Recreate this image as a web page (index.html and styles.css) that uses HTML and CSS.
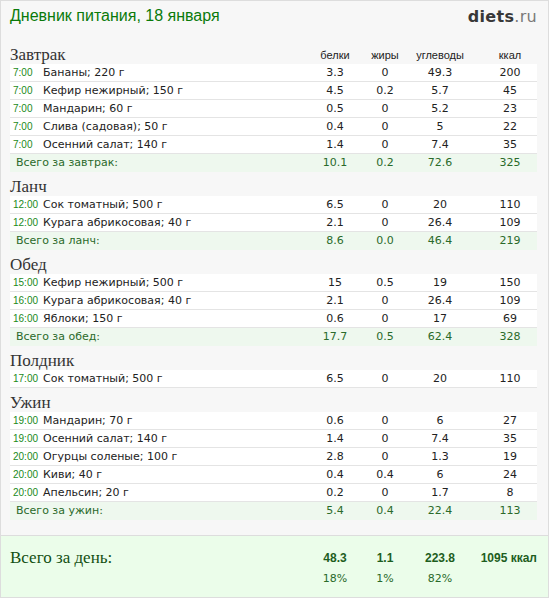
FILE: index.html
```html
<!DOCTYPE html>
<html lang="ru">
<head>
<meta charset="utf-8">
<title>Дневник питания</title>
<link rel="stylesheet" href="styles.css">
</head>
<body>
<div class="page">
  <div class="main">
    <header class="top">
      <h1 class="title">Дневник питания, 18 января</h1>
      <div class="logo"><b>diets</b><span>.ru</span></div>
    </header>

    <section class="meal">
      <div class="meal-head"><h2>Завтрак</h2><span class="lbl">белки</span><span class="lbl">жиры</span><span class="lbl">углеводы</span><span class="lbl kc">ккал</span></div>
      <div class="row"><span class="time">7:00</span><span class="name">Бананы; 220 г</span><span class="num">3.3</span><span class="num">0</span><span class="num">49.3</span><span class="num kc">200</span></div>
      <div class="row"><span class="time">7:00</span><span class="name">Кефир нежирный; 150 г</span><span class="num">4.5</span><span class="num">0.2</span><span class="num">5.7</span><span class="num kc">45</span></div>
      <div class="row"><span class="time">7:00</span><span class="name">Мандарин; 60 г</span><span class="num">0.5</span><span class="num">0</span><span class="num">5.2</span><span class="num kc">23</span></div>
      <div class="row"><span class="time">7:00</span><span class="name">Слива (садовая); 50 г</span><span class="num">0.4</span><span class="num">0</span><span class="num">5</span><span class="num kc">22</span></div>
      <div class="row"><span class="time">7:00</span><span class="name">Осенний салат; 140 г</span><span class="num">1.4</span><span class="num">0</span><span class="num">7.4</span><span class="num kc">35</span></div>
      <div class="row total"><span class="sum">Всего за завтрак:</span><span class="num">10.1</span><span class="num">0.2</span><span class="num">72.6</span><span class="num kc">325</span></div>
    </section>

    <section class="meal">
      <div class="meal-head"><h2>Ланч</h2></div>
      <div class="row"><span class="time">12:00</span><span class="name">Сок томатный; 500 г</span><span class="num">6.5</span><span class="num">0</span><span class="num">20</span><span class="num kc">110</span></div>
      <div class="row"><span class="time">12:00</span><span class="name">Курага абрикосовая; 40 г</span><span class="num">2.1</span><span class="num">0</span><span class="num">26.4</span><span class="num kc">109</span></div>
      <div class="row total"><span class="sum">Всего за ланч:</span><span class="num">8.6</span><span class="num">0.0</span><span class="num">46.4</span><span class="num kc">219</span></div>
    </section>

    <section class="meal">
      <div class="meal-head"><h2>Обед</h2></div>
      <div class="row"><span class="time">15:00</span><span class="name">Кефир нежирный; 500 г</span><span class="num">15</span><span class="num">0.5</span><span class="num">19</span><span class="num kc">150</span></div>
      <div class="row"><span class="time">16:00</span><span class="name">Курага абрикосовая; 40 г</span><span class="num">2.1</span><span class="num">0</span><span class="num">26.4</span><span class="num kc">109</span></div>
      <div class="row"><span class="time">16:00</span><span class="name">Яблоки; 150 г</span><span class="num">0.6</span><span class="num">0</span><span class="num">17</span><span class="num kc">69</span></div>
      <div class="row total"><span class="sum">Всего за обед:</span><span class="num">17.7</span><span class="num">0.5</span><span class="num">62.4</span><span class="num kc">328</span></div>
    </section>

    <section class="meal">
      <div class="meal-head"><h2>Полдник</h2></div>
      <div class="row"><span class="time">17:00</span><span class="name">Сок томатный; 500 г</span><span class="num">6.5</span><span class="num">0</span><span class="num">20</span><span class="num kc">110</span></div>
    </section>

    <section class="meal">
      <div class="meal-head"><h2>Ужин</h2></div>
      <div class="row"><span class="time">19:00</span><span class="name">Мандарин; 70 г</span><span class="num">0.6</span><span class="num">0</span><span class="num">6</span><span class="num kc">27</span></div>
      <div class="row"><span class="time">19:00</span><span class="name">Осенний салат; 140 г</span><span class="num">1.4</span><span class="num">0</span><span class="num">7.4</span><span class="num kc">35</span></div>
      <div class="row"><span class="time">20:00</span><span class="name">Огурцы соленые; 100 г</span><span class="num">2.8</span><span class="num">0</span><span class="num">1.3</span><span class="num kc">19</span></div>
      <div class="row"><span class="time">20:00</span><span class="name">Киви; 40 г</span><span class="num">0.4</span><span class="num">0.4</span><span class="num">6</span><span class="num kc">24</span></div>
      <div class="row"><span class="time">20:00</span><span class="name">Апельсин; 20 г</span><span class="num">0.2</span><span class="num">0</span><span class="num">1.7</span><span class="num kc">8</span></div>
      <div class="row total"><span class="sum">Всего за ужин:</span><span class="num">5.4</span><span class="num">0.4</span><span class="num">22.4</span><span class="num kc">113</span></div>
    </section>
  </div>

  <footer class="day">
    <div class="day-label">Всего за день:</div>
    <span class="big">48.3</span><span class="big">1.1</span><span class="big">223.8</span><span class="big kcal">1095 ккал</span>
    <span class="pct first">18%</span><span class="pct">1%</span><span class="pct">82%</span>
  </footer>
</div>
</body>
</html>
```

FILE: styles.css
```css
html, body {
  margin: 0;
  padding: 0;
  background: #ffffff;
}

.page {
  width: 549px;
  height: 598px;
  box-sizing: border-box;
  border: 1px solid #dddddd;
  background: #f7f7f7;
  display: flex;
  flex-direction: column;
}

.main {
  flex: 1;
  padding: 0 11px 0 9px;
}

.top {
  height: 45px;
  display: flex;
  justify-content: space-between;
  align-items: flex-start;
  padding-top: 5px;
  box-sizing: border-box;
}

.title {
  margin: 0;
  font: normal 16px/20px "Liberation Sans", Arial, sans-serif;
  color: #0a7a0a;
}

.logo {
  font: 16px/22px "DejaVu Sans", sans-serif;
  letter-spacing: 0.3px;
}

.logo b {
  font-weight: bold;
  color: #383838;
}

.logo span {
  color: #7a7a7a;
}

.meal {
  margin-bottom: 6px;
}

.meal-head,
.row,
.day {
  display: grid;
  grid-template-columns: 33px 1fr 50px 50px 60px 67px;
  align-items: center;
}

.meal-head {
  height: 18px;
}

.meal-head h2 {
  grid-column: 1 / 3;
  margin: 0;
  font: normal 17px/18px "Liberation Serif", "Times New Roman", serif;
  color: #333333;
}

.lbl {
  font: 11px/18px "Liberation Sans", Arial, sans-serif;
  color: #222222;
  text-align: center;
}

.kc {
  padding-left: 13px;
}

.row {
  height: 18px;
  box-sizing: border-box;
  background: #ffffff;
  border-bottom: 1px solid #e4e4e4;
  font: 11px/17px "DejaVu Sans", Verdana, sans-serif;
  color: #222222;
}

.time {
  padding-left: 3px;
  font: 10px/17px "Liberation Sans", Arial, sans-serif;
  color: #1a8a1a;
}

.name {
  white-space: nowrap;
}

.num {
  text-align: center;
}

.row.total {
  background: #eef8ee;
  border-bottom-color: #eef8ee;
  color: #2a6a2a;
}

.sum {
  grid-column: 1 / 3;
  padding-left: 6px;
}

.day {
  height: 62px;
  box-sizing: border-box;
  border-top: 1px solid #dddddd;
  background: #ebfdea;
  padding: 13px 11px 0 9px;
  align-content: start;
  row-gap: 3px;
}

.day-label {
  grid-column: 1 / 3;
  font: 17px/18px "Liberation Serif", "Times New Roman", serif;
  color: #124f12;
}

.big {
  font: bold 12px/18px "Liberation Sans", Arial, sans-serif;
  color: #1e5e1e;
  text-align: center;
}

.big.kcal {
  text-align: right;
}

.pct {
  font: 11px/18px "DejaVu Sans", Verdana, sans-serif;
  color: #2a6a2a;
  text-align: center;
}

.pct.first {
  grid-column: 3;
}
```
